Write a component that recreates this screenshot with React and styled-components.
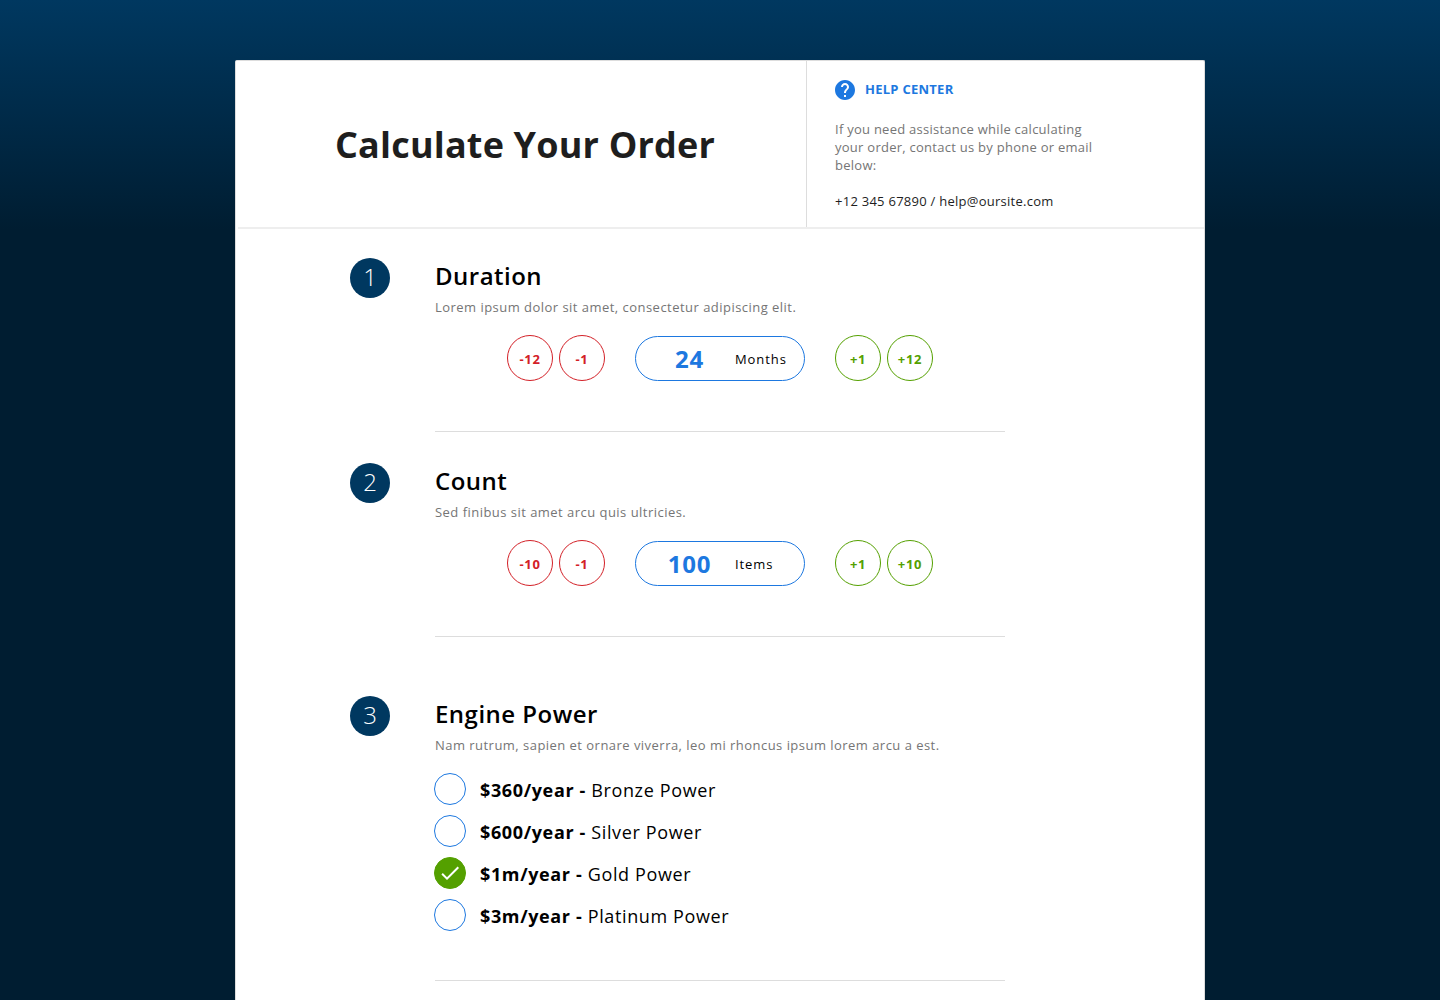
import React, { useState } from 'react';
import styled, { createGlobalStyle } from 'styled-components';

const steppers = [
  {
    number: 1,
    title: 'Duration',
    text: 'Lorem ipsum dolor sit amet, consectetur adipiscing elit.',
    unit: 'Months',
    initial: 24,
    step: 12,
    space: 29,
  },
  {
    number: 2,
    title: 'Count',
    text: 'Sed finibus sit amet arcu quis ultricies.',
    unit: 'Items',
    initial: 100,
    step: 10,
    space: 31,
  },
];

const engines = [
  { id: 'bronze', price: '$360/year', name: 'Bronze Power' },
  { id: 'silver', price: '$600/year', name: 'Silver Power' },
  { id: 'gold', price: '$1m/year', name: 'Gold Power' },
  { id: 'platinum', price: '$3m/year', name: 'Platinum Power' },
];

const GlobalStyle = createGlobalStyle`
  * {
    box-sizing: border-box;
  }

  body {
    margin: 0;
    background-color: #001d31;
    font-family: 'Open Sans', sans-serif;
    font-size: 13px;
    line-height: 18px;
    color: #000;
  }

  h1, h2, p {
    margin: 0;
  }
`;

const Page = styled.div`
  min-height: 100vh;
  padding: 60px 20px 0;
  background: linear-gradient(#003860, #001d31 230px);
`;

const Card = styled.main`
  max-width: 970px;
  min-height: calc(100vh - 60px);
  margin: 0 auto;
  background-color: #fff;
  border: 1px solid #ddd;
  border-bottom: none;
  border-radius: 2px 2px 0 0;
`;

const Header = styled.header`
  display: flex;
  margin-left: 2px;
  border-bottom: 2px solid #eee;
`;

const Title = styled.h1`
  flex: 1;
  align-self: center;
  padding: 2px 0 0 97px;
  font-size: 36px;
  line-height: 48px;
  font-weight: 700;
  letter-spacing: 0.005em;
  color: #1e1e1e;
`;

const Help = styled.section`
  width: 398px;
  padding: 19px 100px 17px 28px;
  border-left: 1px solid #ddd;
  letter-spacing: 0.02em;
`;

const HelpTitle = styled.h2`
  display: flex;
  align-items: flex-start;
  gap: 10px;
  margin-bottom: 20px;
  font-size: 13px;
  line-height: 18px;
  font-weight: 700;
  color: #1d78e0;
`;

const HelpText = styled.p`
  margin-bottom: 18px;
  color: #757575;
`;

const Contact = styled.p`
  color: #1e1e1e;
`;

const ContactLink = styled.a`
  color: inherit;
  text-decoration: none;
`;

const Steps = styled.div`
  padding: 0 199px 0 114px;
`;

const Step = styled.section`
  display: flex;
  gap: 45px;
  padding-top: ${({ $space }) => $space}px;
`;

const StepNumber = styled.span`
  flex: none;
  width: 40px;
  height: 40px;
  border-radius: 50%;
  background-color: #003860;
  color: #fff;
  font-size: 24px;
  line-height: 38px;
  font-weight: 300;
  text-align: center;
`;

const StepBody = styled.div`
  flex: 1;
  padding-bottom: ${({ $bottom = 50 }) => $bottom}px;
  border-bottom: 1px solid #ddd;
`;

const StepTitle = styled.h2`
  font-size: 24px;
  line-height: 36px;
  font-weight: 600;
  letter-spacing: 0.02em;
`;

const StepText = styled.p`
  padding: 4px 0 19px;
  color: #757575;
  letter-spacing: 0.036em;
`;

const Controls = styled.div`
  display: flex;
  justify-content: center;
  align-items: center;
  gap: 30px;
`;

const ButtonGroup = styled.div`
  display: flex;
  gap: 6px;
`;

const RoundButton = styled.button`
  width: 46px;
  height: 46px;
  padding: 2px 0 0;
  border: 1px solid currentColor;
  border-radius: 50%;
  background: none;
  color: ${({ $minus }) => ($minus ? '#d32027' : '#54a000')};
  font: 700 13px/18px 'Open Sans', sans-serif;
  letter-spacing: 0.05em;
  cursor: pointer;
`;

const Field = styled.label`
  display: flex;
  align-items: center;
  width: 170px;
  height: 45px;
  padding-top: 2px;
  border: 1px solid #1d78e0;
  border-radius: 23px;
  letter-spacing: 0.07em;
`;

const FieldInput = styled.input`
  width: 79px;
  margin: 0 6px 0 14px;
  padding: 0;
  border: none;
  outline: none;
  background: none;
  color: #1d78e0;
  font: 700 24px/32px 'Open Sans', sans-serif;
  letter-spacing: 0.03em;
  text-align: center;
`;

const Options = styled.div`
  display: grid;
  gap: 10px;
`;

const Option = styled.label`
  display: flex;
  align-items: center;
  gap: 14px;
  font-size: 18px;
  letter-spacing: 0.035em;
  cursor: pointer;
`;

const OptionText = styled.span`
  padding-top: 2px;
  line-height: 30px;
`;

const RadioBox = styled.span`
  position: relative;
  display: flex;
  margin-left: -1px;
`;

const Radio = styled.input`
  appearance: none;
  width: 32px;
  height: 32px;
  margin: 0;
  border: 1px solid #1d78e0;
  border-radius: 50%;
  cursor: pointer;

  &:checked {
    border-color: #54a000;
    background-color: #54a000;
  }
`;

const Tick = styled.svg`
  position: absolute;
  inset: 0;
  pointer-events: none;
`;

const HelpIcon = () => (
  <svg width="20" height="20" viewBox="2 2 20 20" fill="#1d78e0" aria-hidden="true">
    <path d="M12 2C6.48 2 2 6.48 2 12s4.48 10 10 10 10-4.48 10-10S17.52 2 12 2zm1 17h-2v-2h2v2zm2.07-7.75l-.9.92C13.45 12.9 13 13.5 13 15h-2v-.5c0-1.1.45-2.1 1.17-2.83l1.24-1.26c.37-.36.59-.86.59-1.41 0-1.1-.9-2-2-2s-2 .9-2 2H8c0-2.21 1.79-4 4-4s4 1.79 4 4c0 .88-.36 1.68-.93 2.25z" />
  </svg>
);

const Stepper = ({ number, title, text, unit, initial, step, space }) => {
  const [value, setValue] = useState(initial);

  const change = (amount) => setValue((current) => Math.max(0, Number(current) + amount));

  return (
    <Step $space={space}>
      <StepNumber>{number}</StepNumber>
      <StepBody>
        <StepTitle>{title}</StepTitle>
        <StepText>{text}</StepText>
        <Controls>
          <ButtonGroup>
            <RoundButton type="button" $minus onClick={() => change(-step)}>-{step}</RoundButton>
            <RoundButton type="button" $minus onClick={() => change(-1)}>-1</RoundButton>
          </ButtonGroup>
          <Field>
            <FieldInput
              inputMode="numeric"
              value={value}
              onChange={(e) => setValue(e.target.value.replace(/\D/g, ''))}
            />
            {unit}
          </Field>
          <ButtonGroup>
            <RoundButton type="button" onClick={() => change(1)}>+1</RoundButton>
            <RoundButton type="button" onClick={() => change(step)}>+{step}</RoundButton>
          </ButtonGroup>
        </Controls>
      </StepBody>
    </Step>
  );
};

const App = () => {
  const [engine, setEngine] = useState('gold');

  return (
    <Page>
      <GlobalStyle />
      <Card>
        <Header>
          <Title>Calculate Your Order</Title>
          <Help>
            <HelpTitle>
              <HelpIcon />
              HELP CENTER
            </HelpTitle>
            <HelpText>
              If you need assistance while calculating your order, contact us by phone or email below:
            </HelpText>
            <Contact>
              <ContactLink href="tel:+1234567890">+12 345 67890</ContactLink>
              {' / '}
              <ContactLink href="mailto:help@oursite.com">help@oursite.com</ContactLink>
            </Contact>
          </Help>
        </Header>

        <Steps>
          {steppers.map((item) => (
            <Stepper key={item.number} {...item} />
          ))}

          <Step $space={59}>
            <StepNumber>3</StepNumber>
            <StepBody $bottom={49}>
              <StepTitle>Engine Power</StepTitle>
              <StepText>
                Nam rutrum, sapien et ornare viverra, leo mi rhoncus ipsum lorem arcu a est.
              </StepText>
              <Options role="radiogroup" aria-label="Engine Power">
                {engines.map(({ id, price, name }) => (
                  <Option key={id}>
                    <RadioBox>
                      <Radio
                        type="radio"
                        name="engine"
                        value={id}
                        checked={engine === id}
                        onChange={() => setEngine(id)}
                      />
                      {engine === id && (
                        <Tick width="32" height="32" viewBox="-4 -4 32 32" fill="#fff" aria-hidden="true">
                          <path d="M9 16.17L4.83 12l-1.42 1.41L9 19 21 7l-1.41-1.41z" />
                        </Tick>
                      )}
                    </RadioBox>
                    <OptionText>
                      <b>{price} -</b> {name}
                    </OptionText>
                  </Option>
                ))}
              </Options>
            </StepBody>
          </Step>
        </Steps>
      </Card>
    </Page>
  );
};

export default App;
